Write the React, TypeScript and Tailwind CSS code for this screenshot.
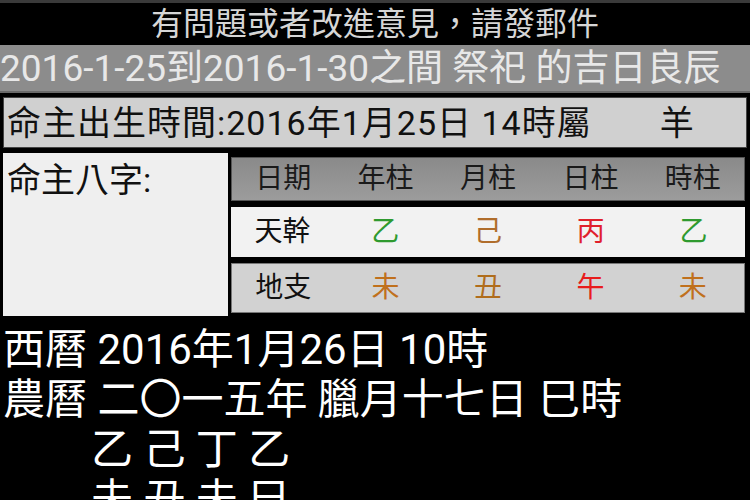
import React from 'react';

const FONT = "font-['Roboto','Noto_Sans_CJK_TC',sans-serif]";

interface Cell {
  text: string;
  color: string;
}

const stems: Cell[] = [
  { text: '乙', color: 'text-[#2f9a2f]' },
  { text: '己', color: 'text-[#b06d2c]' },
  { text: '丙', color: 'text-[#e0202c]' },
  { text: '乙', color: 'text-[#2f9a2f]' },
];

const branches: Cell[] = [
  { text: '未', color: 'text-[#c0701c]' },
  { text: '丑', color: 'text-[#b06d1c]' },
  { text: '午', color: 'text-[#e81c1c]' },
  { text: '未', color: 'text-[#c0701c]' },
];

const TableRow: React.FC<{ label: string; cells: Cell[]; className: string }> = ({ label, cells, className }) => (
  <div className={`grid grid-cols-5 items-center text-[28px] ${className}`}>
    <span className="text-center text-[#111]">{label}</span>
    {cells.map((c, i) => (
      <span key={i} className={`text-center ${c.color}`}>
        {c.text}
      </span>
    ))}
  </div>
);

export default function App() {
  return (
    <div className={`w-[750px] h-[500px] overflow-hidden bg-black ${FONT}`}>
      <div className="h-[3px] bg-[#3a3a3a]" />
      <div className="h-[42px] flex items-center justify-center text-[32px] leading-none text-[#d6d6d6]">
        有問題或者改進意見，請發郵件
      </div>
      <div className="h-[48px] bg-[#8c8c8c] border-b-2 border-[#6a6a6a] flex items-center text-[37px] leading-none text-[#e8e8e8] whitespace-nowrap">
        2016-1-25到2016-1-30之間 祭祀 的吉日良辰
      </div>

      <div className="px-[3px] pt-[4px]">
        <div className="h-[51px] bg-[#d0d0d0] border border-[#444] flex items-center pl-[3px] text-[34px] leading-none text-[#111] whitespace-nowrap">
          <span className="tracking-[1px]">命主出生時間:2016年1月25日 14時屬</span>
          <span className="ml-[68px]">羊</span>
        </div>
      </div>

      <div className="flex gap-[3px] px-[3px] pt-[5px]">
        <div className="w-[225px] h-[163px] shrink-0 bg-[#efefef] px-[4px] pt-[10px] text-[34px] leading-none text-[#111]">
          命主八字:
        </div>
        <div className="flex-1 mr-[2px] pt-[4px] flex flex-col gap-[6px]">
          <div className="h-[44px] grid grid-cols-5 items-center text-[28px] text-[#1a1a1a] bg-gradient-to-b from-[#8a8a8a] to-[#9c9c9c] border border-[#555]">
            <span className="text-center">日期</span>
            <span className="text-center">年柱</span>
            <span className="text-center">月柱</span>
            <span className="text-center">日柱</span>
            <span className="text-center">時柱</span>
          </div>
          <TableRow label="天幹" cells={stems} className="h-[50px] bg-[#f2f2f2]" />
          <TableRow label="地支" cells={branches} className="h-[50px] bg-[#d2d2d2] border border-[#777]" />
        </div>
      </div>

      <div className="pt-[9px] pl-[3px] text-[42px] leading-[50px] text-white whitespace-pre">
        <div>西曆 2016年1月26日 10時</div>
        <div>農曆 二〇一五年 臘月十七日 巳時</div>
        <div className="pl-[88px]">乙 己 丁 乙</div>
        <div className="pl-[88px]">未 丑 未 巳</div>
      </div>
    </div>
  );
}
